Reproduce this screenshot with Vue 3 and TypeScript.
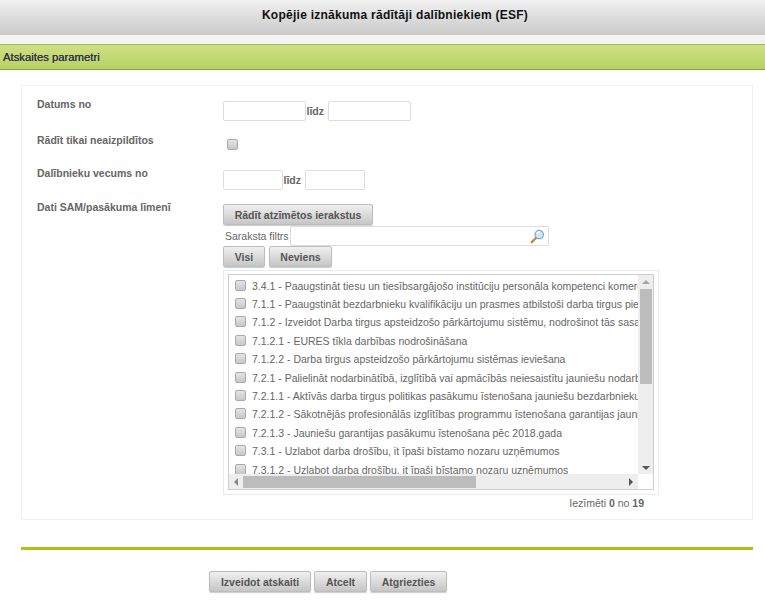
<script setup lang="ts">
const items: string[] = [
  '3.4.1 - Paaugstināt tiesu un tiesībsargājošo institūciju personāla kompetenci komercdarbības vides uzlabošanai',
  '7.1.1 - Paaugstināt bezdarbnieku kvalifikāciju un prasmes atbilstoši darba tirgus pieprasījumam un vajadzībām',
  '7.1.2 - Izveidot Darba tirgus apsteidzošo pārkārtojumu sistēmu, nodrošinot tās sasaisti ar pieprasījumu',
  '7.1.2.1 - EURES tīkla darbības nodrošināšana',
  '7.1.2.2 - Darba tirgus apsteidzošo pārkārtojumu sistēmas ieviešana',
  '7.2.1 - Palielināt nodarbinātībā, izglītībā vai apmācībās neiesaistītu jauniešu nodarbinātību un izglītību',
  '7.2.1.1 - Aktīvās darba tirgus politikas pasākumu īstenošana jauniešu bezdarbnieku nodarbinātībai',
  '7.2.1.2 - Sākotnējās profesionālās izglītības programmu īstenošana garantijas jauniešiem projekta ietvaros',
  '7.2.1.3 - Jauniešu garantijas pasākumu īstenošana pēc 2018.gada',
  '7.3.1 - Uzlabot darba drošību, it īpaši bīstamo nozaru uzņēmumos',
  '7.3.1.2 - Uzlabot darba drošību, it īpaši bīstamo nozaru uzņēmumos'
]
</script>

<template>
  <div class="page">
    <header class="top">Kopējie iznākuma rādītāji dalībniekiem (ESF)</header>
    <div class="section">Atskaites parametri</div>

    <main class="card">
      <div class="row row-date">
        <label class="lbl">Datums no</label>
        <div class="line">
          <input class="inp w-83" type="text" />
          <span class="to">līdz</span>
          <input class="inp w-83" type="text" />
        </div>
      </div>
      <div class="row row-check">
        <label class="lbl">Rādīt tikai neaizpildītos</label>
        <span class="cb cb-solo"></span>
      </div>
      <div class="row row-age">
        <label class="lbl">Dalībnieku vecums no</label>
        <div class="line">
          <input class="inp w-60" type="text" />
          <span class="to">līdz</span>
          <input class="inp w-60" type="text" />
        </div>
      </div>
      <div class="row row-data">
        <label class="lbl">Dati SAM/pasākuma līmenī</label>
        <div class="stack">
          <button class="btn b-show">Rādīt atzīmētos ierakstus</button>
          <div class="filter">
            <span class="filter-lbl">Saraksta filtrs</span>
            <div class="search">
              <svg class="glass" width="15" height="15" viewBox="0 0 15 15" aria-hidden="true">
                <path d="M6 9 L1.8 13.2" stroke="#c98a3c" stroke-width="2.4" stroke-linecap="round" />
                <circle cx="9.2" cy="5.6" r="4.2" fill="#cfe8f7" stroke="#7fa9c4" stroke-width="1.3" />
                <path d="M7 4.4 A2.8 2.8 0 0 1 10 3" fill="none" stroke="#fff" stroke-width="1.1" />
              </svg>
            </div>
          </div>
          <div class="pair">
            <button class="btn b-all">Visi</button>
            <button class="btn b-none">Neviens</button>
          </div>
          <div class="outer">
            <div class="listbox">
              <div class="viewport">
                <div v-for="item in items" :key="item" class="item">
                  <span class="cb"></span>
                  <span class="item-text">{{ item }}</span>
                </div>
              </div>
              <div class="vbar">
                <span class="arrow up"></span>
                <span class="vthumb"></span>
                <span class="arrow down"></span>
              </div>
              <div class="hbar">
                <span class="arrow left"></span>
                <span class="hthumb"></span>
                <span class="arrow right"></span>
              </div>
              <div class="corner"></div>
            </div>
          </div>
          <div class="count">Iezīmēti <b>0</b> no <b>19</b></div>
        </div>
      </div>
    </main>

    <div class="rule"></div>

    <footer class="actions">
      <button class="btn b-make">Izveidot atskaiti</button>
      <button class="btn b-cancel">Atcelt</button>
      <button class="btn b-back">Atgriezties</button>
    </footer>
  </div>
</template>

<style>
html, body { margin: 0; background: #fff; }
</style>

<style scoped>
.page {
  width: 765px;
  height: 600px;
  overflow: hidden;
  background: #fff;
  font-family: "Liberation Sans", Arial, sans-serif;
  font-size: 11px;
  color: #555;
}
.top {
  height: 35px;
  line-height: 31px;
  box-sizing: border-box;
  padding-left: 25px;
  text-align: center;
  font-weight: bold;
  font-size: 12px;
  letter-spacing: 0.26px;
  color: #111;
  background: linear-gradient(#f1f1f1, #c9c9c9);
}
.section {
  margin-top: 9px;
  height: 26px;
  box-sizing: border-box;
  padding-left: 3px;
  line-height: 25px;
  font-size: 11.3px;
  color: #33324f;
  text-shadow: 0 0 0.6px #33324f;
  background: linear-gradient(#cfe083, #b7d163);
  border-top: 1px solid #9fb54e;
  border-bottom: 1px solid #8ca53a;
  box-shadow: 0 -9px 0 #f3f3f3, 0 1px 2px #eee;
}
.card {
  margin: 15px 12px 0 21px;
  height: 435px;
  box-sizing: border-box;
  border: 1px solid #edf0f3;
  padding: 12px 0 0 15px;
}
.row {
  display: grid;
  grid-template-columns: 186px 1fr;
  align-items: start;
}
.row-date { height: 36px; }
.row-check { height: 33px; }
.row-age { height: 34px; }
.lbl {
  font-weight: bold;
  font-size: 10.5px;
  color: #666;
  line-height: 13px;
}
.line {
  display: flex;
  align-items: center;
  margin-top: 3px;
}
.inp {
  box-sizing: border-box;
  height: 20px;
  border: 1px solid #ddd;
  border-radius: 2px;
  background: #fff;
  padding: 0;
  margin: 0;
}
.w-83 { width: 83px; }
.w-60 { width: 60px; }
.to {
  font-weight: bold;
  font-size: 10.5px;
  color: #666;
  padding: 0 3.5px 0 0.5px;
}
.cb {
  display: block;
  flex: none;
  box-sizing: border-box;
  width: 11px;
  height: 11px;
  border: 1px solid #a9a9a9;
  border-radius: 2px;
  background: linear-gradient(#e4e4e4, #c8c8c8);
}
.cb-solo { margin: 5px 0 0 4px; }
.stack { display: flex; flex-direction: column; margin-top: 3px; }
.btn {
  box-sizing: border-box;
  height: 21px;
  padding: 0;
  margin: 0;
  border: 1px solid #bdbdbd;
  border-radius: 2px;
  background: linear-gradient(#f0f0f0, #c6c6c6);
  font-family: inherit;
  font-size: 10.5px;
  font-weight: bold;
  color: #555;
  box-shadow: 0 1px 1px #ccc;
}
.b-show { width: 150px; }
.filter {
  display: flex;
  align-items: center;
  margin-top: 1px;
  height: 20px;
}
.filter-lbl {
  width: 67px;
  flex: none;
  font-size: 10.5px;
  padding-left: 2px;
  box-sizing: border-box;
  color: #666;
  white-space: nowrap;
}
.search {
  box-sizing: border-box;
  width: 259px;
  height: 20px;
  border: 1px solid #ddd;
  border-radius: 2px;
  display: flex;
  align-items: center;
  justify-content: flex-end;
  padding-right: 3px;
}
.pair { display: flex; gap: 4px; }
.b-all { width: 42px; }
.b-none { width: 63px; }
.outer {
  margin-top: 3px;
  width: 436px;
  height: 225px;
  box-sizing: border-box;
  border: 1px solid #e6ecf1;
  padding: 3px 4px 4px 4px;
}
.listbox {
  box-sizing: border-box;
  height: 100%;
  border: 1px solid #cfcfcf;
  display: grid;
  grid-template-columns: 1fr 15px;
  grid-template-rows: 1fr 15px;
}
.viewport {
  overflow: hidden;
  padding: 1px 0 0 6px;
  min-width: 0;
  background: #fff;
}
.item {
  display: flex;
  align-items: center;
  height: 18.4px;
  white-space: nowrap;
}
.item-text {
  margin-left: 6px;
  font-size: 10.5px;
  color: #666;
  line-height: 15px;
  padding-top: 2px;
}
.vbar {
  background: #eee;
  display: flex;
  flex-direction: column;
  align-items: center;
}
.vthumb {
  width: 12px;
  height: 95px;
  margin-top: 5px;
  background: #bcbcbc;
}
.hbar {
  background: #eee;
  display: flex;
  align-items: center;
  min-width: 0;
}
.hthumb {
  width: 233px;
  height: 12px;
  background: #bcbcbc;
  margin-left: 5px;
}
.corner { background: #fff; }
.arrow { display: block; width: 0; height: 0; flex: none; }
.up {
  border-left: 4px solid transparent;
  border-right: 4px solid transparent;
  border-bottom: 4px solid #a5a5a5;
  margin-top: 5px;
}
.down {
  border-left: 4px solid transparent;
  border-right: 4px solid transparent;
  border-top: 4px solid #555;
  margin-top: auto;
  margin-bottom: 4px;
}
.left {
  border-top: 4px solid transparent;
  border-bottom: 4px solid transparent;
  border-right: 4px solid #888;
  margin-left: 5px;
}
.right {
  border-top: 4px solid transparent;
  border-bottom: 4px solid transparent;
  border-left: 4px solid #555;
  margin-left: auto;
  margin-right: 5px;
}
.count {
  margin-top: 1px;
  width: 421px;
  text-align: right;
  font-size: 10.5px;
  line-height: 14px;
  color: #666;
}
.rule {
  margin: 27px 12px 0 21px;
  height: 3px;
  background: #a6c70f;
}
.actions {
  display: flex;
  gap: 3px;
  margin: 21px 0 0 209px;
}
.b-make { width: 102px; }
.b-cancel { width: 53px; }
.b-back { width: 77px; }
</style>
